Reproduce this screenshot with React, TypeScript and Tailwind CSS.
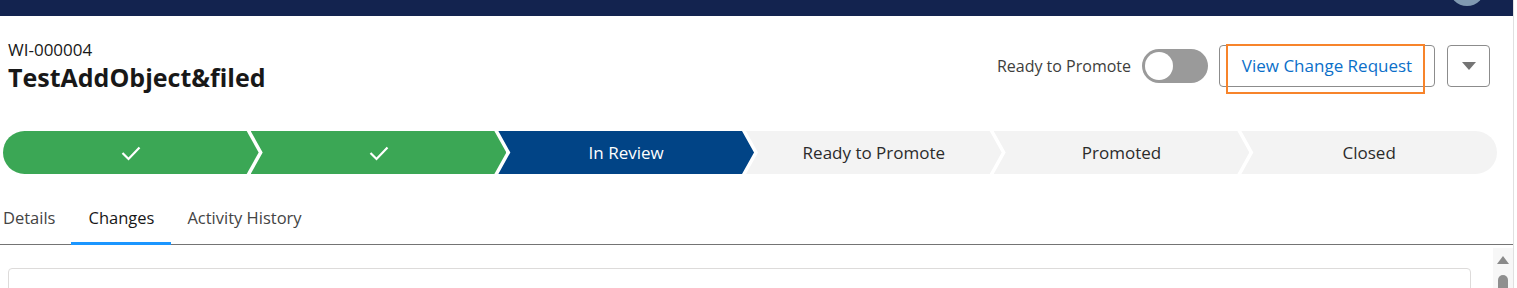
import React from 'react';

const steps = [
  { label: '', state: 'done' },
  { label: '', state: 'done' },
  { label: 'In Review', state: 'current' },
  { label: 'Ready to Promote', state: 'todo' },
  { label: 'Promoted', state: 'todo' },
  { label: 'Closed', state: 'todo' },
];

function Check() {
  return (
    <svg width="20" height="16" viewBox="0 0 20 16" fill="none">
      <path d="M1.5 8 L7.5 14 L18.5 2.5" stroke="white" strokeWidth="2.2" />
    </svg>
  );
}

export default function App() {
  return (
    <div className="flex h-[288px] w-[1517px] overflow-hidden bg-white text-[#181818] [font-family:'Open_Sans',sans-serif]">
      <div className="flex w-[1513px] flex-col">
        {/* top nav */}
        <div className="relative h-[16px] shrink-0 bg-[#13234f]">
          <div className="absolute left-[1449px] top-[-30px] h-[36px] w-[36px] rounded-full bg-[#8099b1]" />
        </div>

        {/* header */}
        <div className="flex h-[115px] shrink-0 justify-between pr-[23px]">
          <div className="pl-[8px] pt-[23px]">
            <div className="text-[17px] leading-[22px]">WI-000004</div>
            <div className="text-[25px] font-bold leading-[32px]">TestAddObject&amp;filed</div>
          </div>
          <div className="flex items-center self-start pt-[29px]">
            <span className="text-[16px] text-[#3e3e3c]">Ready to Promote</span>
            <div className="ml-[11px] flex h-[34px] w-[66px] items-center rounded-full bg-[#9a9a9a] p-[3px]">
              <div className="h-[28px] w-[28px] rounded-full bg-white" />
            </div>
            <div className="relative ml-[11px]">
              <button className="flex h-[42px] w-[216px] items-center justify-center rounded-[4px] border border-[#8c8c8c] bg-white text-[17px] text-[#0b6fc9]">
                View Change Request
              </button>
              <div className="absolute left-[7px] top-[-1px] h-[50px] w-[199px] border-2 border-[#f7842b]" />
            </div>
            <button className="ml-[12px] flex h-[42px] w-[43px] items-center justify-center rounded-[4px] border border-[#8c8c8c] bg-white">
              <svg width="14" height="8" viewBox="0 0 14 8">
                <path d="M0 0 L14 0 L7 8 Z" fill="#747474" />
              </svg>
            </button>
          </div>
        </div>

        {/* path */}
        <div className="ml-[3px] mr-[16px] flex h-[43px] shrink-0">
          {steps.map((s, i) => {
            const first = i === 0;
            const last = i === steps.length - 1;
            const bg =
              s.state === 'done' ? 'bg-[#3ba755]' : s.state === 'current' ? 'bg-[#014486]' : 'bg-[#f3f3f3]';
            const text = s.state === 'current' ? 'text-white' : 'text-[#2b2b2b]';
            const shape = first
              ? 'rounded-l-full [clip-path:polygon(0_0,calc(100%-12px)_0,100%_50%,calc(100%-12px)_100%,0_100%)]'
              : last
                ? '-ml-[8px] rounded-r-full [clip-path:polygon(0_0,100%_0,100%_100%,0_100%,12px_50%)]'
                : '-ml-[8px] [clip-path:polygon(0_0,calc(100%-12px)_0,100%_50%,calc(100%-12px)_100%,0_100%,12px_50%)]';
            return (
              <div key={i} className={`flex flex-1 items-center justify-center text-[17px] ${bg} ${text} ${shape}`}>
                {s.state === 'done' ? <Check /> : s.label}
              </div>
            );
          })}
        </div>

        {/* tabs */}
        <div className="mt-[29px] flex shrink-0 border-b border-[#747474] pl-[3px] text-[16.5px] text-[#444]">
          <div className="-mb-px h-[42px] pr-[16px] pt-[3px]">Details</div>
          <div className="-mb-px h-[42px] border-b-[3px] border-[#1b96ff] px-[17px] pt-[3px] text-[#181818]">Changes</div>
          <div className="-mb-px h-[42px] px-[16px] pt-[3px]">Activity History</div>
        </div>

        {/* content */}
        <div className="flex flex-1">
          <div className="flex-1 pl-[8px] pt-[23px]">
            <div className="h-[60px] w-[1463px] rounded-[4px] border border-[#dddbda]" />
          </div>
          <div className="mt-[3px] flex w-[20px] flex-col items-center bg-[#f7f7f7] pt-[8px]">
            <svg width="12" height="8" viewBox="0 0 12 8">
              <path d="M6 0 L12 8 L0 8 Z" fill="#8a8a8a" />
            </svg>
            <div className="mt-[11px] h-[40px] w-[10px] rounded-t-full bg-[#8f8f8f]" />
          </div>
        </div>
      </div>
      <div className="w-[4px] border-l border-[#e0e0e0] bg-white" />
    </div>
  );
}
